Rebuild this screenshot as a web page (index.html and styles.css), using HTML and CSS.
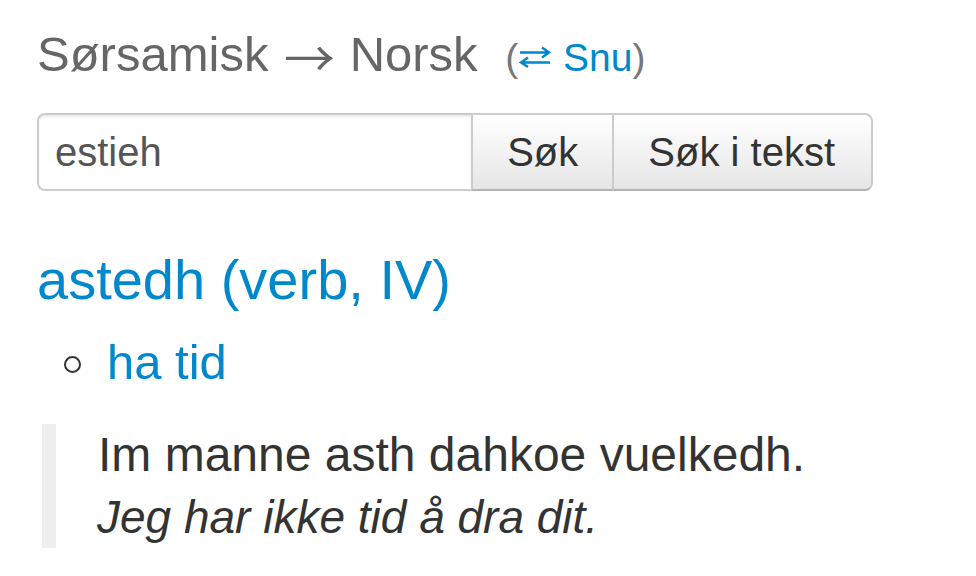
FILE: index.html
```html
<!DOCTYPE html>
<html lang="no">
<head>
<meta charset="utf-8">
<title>Sørsamisk → Norsk</title>
<link rel="stylesheet" href="styles.css">
</head>
<body>
<div class="page">
  <h1 class="title">Sørsamisk <span class="arrow">→</span> Norsk <small class="swap">(<a href="#" class="swap-link"><svg class="swap-icon" width="34" height="22" viewBox="0 0 34 22" aria-hidden="true"><path d="M2 6.5H31M24 1.5L31 6.5L24 11.5" fill="none" stroke="#0088cc" stroke-width="2.4" stroke-linejoin="miter"/><path d="M32 16.5H3M10 11.5L3 16.5L10 21" fill="none" stroke="#0088cc" stroke-width="2.4" stroke-linejoin="miter"/></svg> Snu</a>)</small></h1>

  <form class="search">
    <input class="search-input" type="text" value="estieh">
    <button class="btn" type="button">Søk</button>
    <button class="btn btn-last" type="button">Søk i tekst</button>
  </form>

  <h2 class="entry"><a href="#">astedh (verb, IV)</a></h2>
  <ul class="senses">
    <li class="sense"><span class="bullet"></span><a href="#">ha tid</a></li>
  </ul>
  <blockquote class="example">
    <p class="ex-src">Im manne asth dahkoe vuelkedh.</p>
    <p class="ex-trans">Jeg har ikke tid å dra dit.</p>
  </blockquote>
</div>
</body>
</html>
```

FILE: styles.css
```css
html, body {
  margin: 0;
  padding: 0;
  background: #fff;
}
body {
  font-family: "Liberation Sans", Arial, Helvetica, sans-serif;
  color: #333;
}
a {
  color: #0088cc;
  text-decoration: none;
}
.page {
  padding: 0 37px;
}
.title {
  margin: 26px 0 0;
  height: 56px;
  font-size: 49px;
  line-height: 56px;
  font-weight: normal;
  color: #666;
  white-space: nowrap;
}
.arrow {
  display: inline-block;
  font-family: "Noto Sans CJK JP", "DejaVu Sans", sans-serif;
  font-size: 49px;
  line-height: 1;
  color: #666;
  margin: 0 2px 0 3px;
  vertical-align: -6px;
  transform: scaleX(1.04);
}
.swap {
  font-size: 39px;
  line-height: 1;
  color: #777;
  margin-left: 14px;
}
.swap-link {
  color: #0088cc;
}
.swap-icon {
  vertical-align: 3px;
}
.search {
  margin: 31px 0 0;
  display: flex;
  width: 836px;
  height: 78px;
}
.search-input {
  flex: 1 1 auto;
  width: 0;
  min-width: 0;
  box-sizing: border-box;
  height: 78px;
  margin: 0;
  border: 2px solid #ccc;
  border-right: none;
  border-radius: 8px 0 0 8px;
  padding: 0 16px;
  font-family: inherit;
  font-size: 40px;
  color: #555;
  background: #fff;
  box-shadow: inset 0 2px 2px rgba(0,0,0,0.075);
  outline: none;
}
.btn {
  flex: 0 0 auto;
  white-space: nowrap;
  box-sizing: border-box;
  height: 78px;
  margin: 0;
  padding: 0 34px;
  font-family: inherit;
  font-size: 40px;
  color: #333;
  background: linear-gradient(#ffffff, #e6e6e6);
  border: 2px solid #ccc;
  border-bottom-color: #b3b3b3;
  border-radius: 0;
  cursor: pointer;
}
.btn + .btn {
  border-left: none;
}
.btn-last {
  border-radius: 0 8px 8px 0;
  padding: 0 36px 0 34px;
}
.entry {
  margin: 57px 0 0;
  font-size: 56px;
  line-height: 64px;
  font-weight: normal;
}
.senses {
  list-style: none;
  margin: 18px 0 0;
  padding: 0 0 0 26px;
}
.sense {
  display: flex;
  align-items: center;
  font-size: 49px;
  line-height: 64px;
}
.bullet {
  box-sizing: border-box;
  width: 17px;
  height: 17px;
  border: 2.5px solid #333;
  border-radius: 50%;
  margin: 4px 26px 0 1px;
}
.example {
  margin: 30px 0 0 5px;
  padding: 0 0 0 42px;
  border-left: 14px solid #eee;
}
.example p {
  margin: 0;
}
.ex-src {
  font-size: 48px;
  line-height: 62px;
}
.ex-trans {
  font-size: 46px;
  line-height: 62px;
  font-style: italic;
  margin-left: -1px !important;
}
```
